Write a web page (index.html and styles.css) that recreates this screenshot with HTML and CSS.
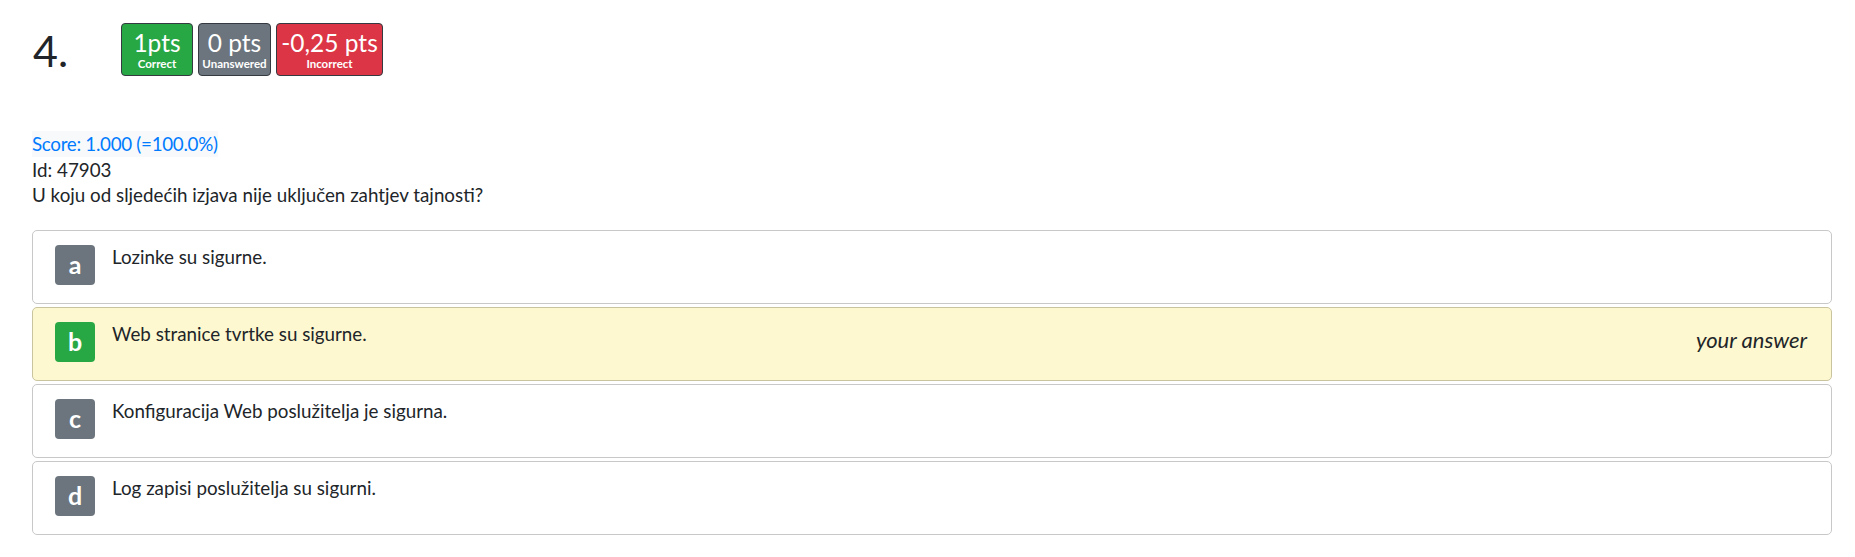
FILE: index.html
```html
<!DOCTYPE html>
<html lang="hr">
<head>
<meta charset="utf-8">
<title>Question 4</title>
<link rel="stylesheet" href="styles.css">
</head>
<body>
<main class="page">
  <header class="q-head">
    <div class="q-num">4.</div>
    <div class="pts-list">
      <div class="pts pts-correct"><span class="pts-val">1pts</span><span class="pts-lbl">Correct</span></div>
      <div class="pts pts-unanswered"><span class="pts-val">0 pts</span><span class="pts-lbl">Unanswered</span></div>
      <div class="pts pts-incorrect"><span class="pts-val">-0,25 pts</span><span class="pts-lbl">Incorrect</span></div>
    </div>
  </header>

  <section class="q-info">
    <div class="score"><span class="score-text">Score: 1.000 (=100.0%)</span></div>
    <div class="q-id">Id: 47903</div>
    <div class="q-text">U koju od sljedećih izjava nije uključen zahtjev tajnosti?</div>
  </section>

  <ul class="answers">
    <li class="answer">
      <span class="letter">a</span>
      <span class="answer-text">Lozinke su sigurne.</span>
    </li>
    <li class="answer answer-chosen">
      <span class="letter letter-correct">b</span>
      <span class="answer-text">Web stranice tvrtke su sigurne.</span>
      <span class="your-answer">your answer</span>
    </li>
    <li class="answer">
      <span class="letter">c</span>
      <span class="answer-text">Konfiguracija Web poslužitelja je sigurna.</span>
    </li>
    <li class="answer">
      <span class="letter">d</span>
      <span class="answer-text">Log zapisi poslužitelja su sigurni.</span>
    </li>
  </ul>
</main>
</body>
</html>
```

FILE: styles.css
```css
* { box-sizing: border-box; }

html, body {
  margin: 0;
  padding: 0;
  background: #ffffff;
}

body {
  font-family: "Lato", "Open Sans", "Noto Sans", sans-serif;
  font-size: 18.8px;
  color: #212529;
}

.page {
  padding: 23px 23px 0 32px;
}

/* header */
.q-head {
  display: flex;
  align-items: flex-start;
}

.q-num {
  width: 89px;
  font-size: 43px;
  line-height: 1;
  padding-top: 6px;
  padding-left: 1px;
  color: #212529;
}

.pts-list {
  display: flex;
  gap: 5px;
}

.pts {
  display: flex;
  flex-direction: column;
  align-items: center;
  width: 72px;
  height: 53px;
  padding: 5px 0 0;
  border: 1px solid #343a40;
  border-radius: 4px;
  color: #ffffff;
}

.pts-correct { background: #28a745; }
.pts-unanswered { background: #6c757d; width: 73px; }
.pts-incorrect { background: #dc3545; width: 107px; }

.pts-val {
  font-size: 24.5px;
  line-height: 28px;
  white-space: nowrap;
}

.pts-lbl {
  font-size: 11.5px;
  font-weight: 700;
  line-height: 14px;
  white-space: nowrap;
}

/* info */
.q-info {
  margin-top: 55px;
}

.score {
  line-height: 26px;
}

.score-text {
  display: inline-block;
  background: #f8f9fa;
  color: #007bff;
  letter-spacing: -0.3px;
}

.q-id,
.q-text {
  line-height: 25px;
}

/* answers */
.answers {
  list-style: none;
  margin: 23px 0 0;
  padding: 0;
  display: flex;
  flex-direction: column;
  gap: 3px;
}

.answer {
  display: flex;
  align-items: flex-start;
  min-height: 74px;
  padding: 14px 24px 18px 22px;
  border: 1px solid #c8c8c8;
  border-radius: 5px;
  background: #ffffff;
}

.answer-chosen {
  background: #fdf8cf;
  border-color: #cac49e;
}

.letter {
  flex: none;
  width: 40px;
  height: 40px;
  border-radius: 4px;
  background: #6c757d;
  color: #ffffff;
  font-size: 25px;
  font-weight: 700;
  line-height: 38px;
  text-align: center;
}

.letter-correct { background: #28a745; }

.answer-text {
  margin-left: 17px;
  line-height: 24px;
}

.your-answer {
  margin-left: auto;
  font-size: 22px;
  font-style: italic;
  line-height: 26px;
  padding-top: 5px;
}
```
